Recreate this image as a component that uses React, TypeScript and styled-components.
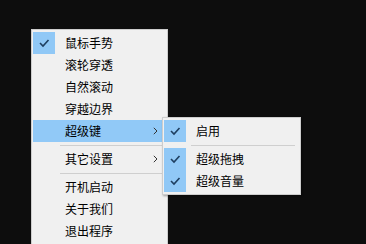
import React from "react";
import styled, { createGlobalStyle } from "styled-components";

const GlobalStyle = createGlobalStyle`
  html, body {
    margin: 0;
    padding: 0;
    background: #0d0d0d;
  }
  body {
    font-family: "Noto Sans CJK SC", "Noto Sans", sans-serif;
  }
`;

const Page = styled.div`
  width: 366px;
  height: 244px;
  overflow: hidden;
  box-sizing: border-box;
  padding: 29px 0 0 31px;
  background: #0d0d0d;
`;

const Menu = styled.div<{ $width: number }>`
  position: relative;
  width: ${(p) => p.$width}px;
  box-sizing: border-box;
  border: 1px solid #cdcdcd;
  background: #f0f0f0;
  padding: 2px 1px;
  display: flex;
  flex-direction: column;
`;

const SubMenu = styled(Menu)`
  position: absolute;
  left: 129px;
  top: -3px;
  z-index: 2;
  box-shadow: 1px 1px 2px rgba(0, 0, 0, 0.35);
`;

const Item = styled.div<{ $active?: boolean }>`
  position: relative;
  height: 22px;
  display: flex;
  align-items: center;
  background: ${(p) => (p.$active ? "#91c9f7" : "transparent")};
  color: #000;
  font-size: 12px;
  line-height: 22px;
  white-space: nowrap;
`;

const CheckBox = styled.div<{ $checked?: boolean }>`
  width: 22px;
  height: 22px;
  flex: none;
  display: flex;
  align-items: center;
  justify-content: center;
  background: ${(p) => (p.$checked ? "#90c8f6" : "transparent")};
`;

const Label = styled.span`
  margin-left: 10px;
`;

const Arrow = styled.span`
  margin-left: auto;
  margin-right: 8px;
  display: flex;
  align-items: center;
`;

const Separator = styled.div`
  height: 6px;
  display: flex;
  align-items: center;
  &::after {
    content: "";
    flex: 1;
    height: 1px;
    margin: 0 4px 0 27px;
    background: #cfcfcf;
  }
`;

const Check = () => (
  <svg width="12" height="10" viewBox="0 0 12 10">
    <polyline
      points="2,5 5,8 10.5,2"
      fill="none"
      stroke="#1f3f60"
      strokeWidth="1.6"
    />
  </svg>
);

const Chevron = () => (
  <svg width="5" height="8" viewBox="0 0 5 8">
    <polyline points="0.8,0.8 4,4 0.8,7.2" fill="none" stroke="#333" strokeWidth="1" />
  </svg>
);

type Row =
  | { kind: "sep" }
  | { kind: "item"; label: string; checked?: boolean; arrow?: boolean; active?: boolean; sub?: boolean };

const mainRows: Row[] = [
  { kind: "item", label: "鼠标手势", checked: true },
  { kind: "item", label: "滚轮穿透" },
  { kind: "item", label: "自然滚动" },
  { kind: "item", label: "穿越边界" },
  { kind: "item", label: "超级键", arrow: true, active: true, sub: true },
  { kind: "sep" },
  { kind: "item", label: "其它设置", arrow: true },
  { kind: "sep" },
  { kind: "item", label: "开机启动" },
  { kind: "item", label: "关于我们" },
  { kind: "item", label: "退出程序" },
];

const subRows: Row[] = [
  { kind: "item", label: "启用", checked: true },
  { kind: "sep" },
  { kind: "item", label: "超级拖拽", checked: true },
  { kind: "item", label: "超级音量", checked: true },
];

const renderRows = (rows: Row[], sub?: React.ReactNode) =>
  rows.map((r, i) =>
    r.kind === "sep" ? (
      <Separator key={i} />
    ) : (
      <Item key={i} $active={r.active}>
        <CheckBox $checked={r.checked}>{r.checked && <Check />}</CheckBox>
        <Label>{r.label}</Label>
        {r.arrow && (
          <Arrow>
            <Chevron />
          </Arrow>
        )}
        {r.sub && sub}
      </Item>
    )
  );

export default function App() {
  return (
    <>
      <GlobalStyle />
      <Page>
        <Menu $width={137}>
          {renderRows(
            mainRows,
            <SubMenu $width={139}>{renderRows(subRows)}</SubMenu>
          )}
        </Menu>
      </Page>
    </>
  );
}
